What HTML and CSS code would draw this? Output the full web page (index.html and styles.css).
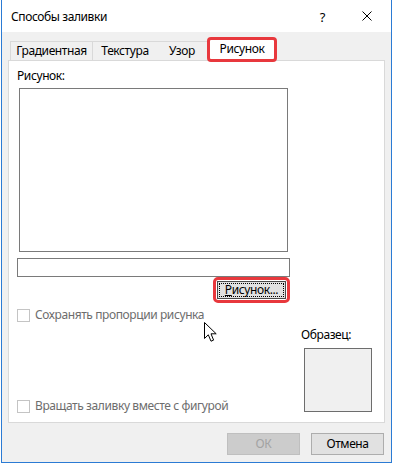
FILE: index.html
```html
<!DOCTYPE html>
<html lang="ru">
<head>
  <meta charset="UTF-8">
  <meta name="viewport" content="width=device-width, initial-scale=1.0">
  <title>Способы заливки</title>
  <link rel="stylesheet" href="styles.css">
</head>
<body>
  <div class="window">
    <div class="titlebar">
      <span class="title">Способы заливки</span>
      <span class="help">?</span>
      <svg class="close" width="10" height="10" viewBox="0 0 10 10">
        <path d="M0.5 0.5 L9.5 9.5 M9.5 0.5 L0.5 9.5" stroke="#000" stroke-width="1" fill="none"/>
      </svg>
    </div>

    <div class="tabs">
      <div class="tab tab-grad">Градиентная</div>
      <div class="tab tab-tex">Текстура</div>
      <div class="tab tab-pat">Узор</div>
      <div class="tab tab-pic active">Рисунок</div>
    </div>

    <div class="panel">
      <div class="left-col">
        <div class="label">Рисунок:</div>
        <div class="picture-box"></div>
        <div class="text-field"></div>
        <div class="btn-row">
          <div class="highlight">
            <button class="btn btn-focus"><u>Р</u>исунок...</button>
          </div>
        </div>
        <label class="check disabled">
          <span class="box"></span>
          <span>Сохранять пропорции рисунка</span>
        </label>
        <label class="check disabled check-bottom">
          <span class="box"></span>
          <span>Вращать заливку вместе с фигурой</span>
        </label>
      </div>
      <div class="right-col">
        <div class="label">Образец:</div>
        <div class="sample"></div>
      </div>
    </div>

    <div class="footer">
      <button class="btn btn-ok" disabled>ОК</button>
      <button class="btn btn-cancel">Отмена</button>
    </div>

    <!-- mouse pointer over the dialog -->
    <svg class="cursor" width="14" height="21" viewBox="0 0 14 21">
      <path d="M0.5 0.5 L0.5 16.5 L4.3 12.8 L7 19.2 L9.6 18.1 L7 11.8 L12.2 11.8 Z" fill="#fff" stroke="#000" stroke-width="1" stroke-linejoin="miter"/>
    </svg>
  </div>
</body>
</html>
```

FILE: styles.css
```css
body {
  margin: 0;
  background: #ffffff;
  font-family: "Noto Sans", "Liberation Sans", sans-serif;
  font-size: 12px;
  line-height: 16px;
  letter-spacing: -0.4px;
  color: #000000;
}
.window {
  position: relative;
  box-sizing: border-box;
  width: 391px;
  height: 463px;
  margin-left: 1px;
  background: #f0f0f0;
  border-left: 1px solid #2b7bd4;
  border-right: 1px solid #2b7bd4;
  border-bottom: 1px solid #2b7bd4;
  padding: 0 6px;
  display: flex;
  flex-direction: column;
}
.titlebar {
  height: 32px;
  margin: 0 -6px;
  background: #ffffff;
  display: flex;
  align-items: center;
  padding-left: 9px;
}
.title {
  flex: 1;
  padding-top: 1px;
}
.help {
  font-size: 13px;
  margin-right: 37px;
  padding-top: 1px;
}
.close {
  margin-right: 19px;
}

/* tabs */
.tabs {
  display: flex;
  height: 19px;
  margin-top: 9px;
  padding-left: 2px;
}
.tab {
  box-sizing: border-box;
  height: 19px;
  text-align: center;
  border-top: 1px solid #d9d9d9;
  line-height: 18px;
  background: #f0f0f0;
}
.tab-grad {
  width: 83px;
  border-left: 1px solid #d9d9d9;
  border-right: 1px solid #d9d9d9;
}
.tab-tex {
  width: 64px;
}
.tab-pat {
  width: 50px;
}
.tab.active {
  position: relative;
  z-index: 1;
  width: 70px;
  height: 25px;
  margin-top: -4px;
  background: #ffffff;
  border: 3px solid #e8383d;
  border-radius: 4px;
  line-height: 18px;
}

/* tab page */
.panel {
  box-sizing: border-box;
  height: 363px;
  background: #ffffff;
  border: 1px solid #d9d9d9;
  display: flex;
  padding: 7px 0 0 8px;
}
.left-col {
  width: 273px;
  display: flex;
  flex-direction: column;
  padding-bottom: 8px;
}
.picture-box {
  box-sizing: border-box;
  width: 269px;
  height: 164px;
  margin: 4px 0 0 2px;
  border: 1px solid #7a7a7a;
}
.text-field {
  box-sizing: border-box;
  height: 19px;
  margin-top: 6px;
  border: 1px solid #7a7a7a;
}
.btn-row {
  display: flex;
  justify-content: flex-end;
}
.highlight {
  border: 3px solid #e8383d;
  border-radius: 5px;
  padding: 1px;
  background: #ffffff;
}
.check {
  display: flex;
  align-items: center;
  margin-top: 4px;
}
.check .box {
  box-sizing: border-box;
  width: 13px;
  height: 13px;
  border: 1px solid #c4c4c4;
  margin-right: 5px;
  background: #ffffff;
}
.check.disabled {
  color: #6d6d6d;
}
.check-bottom {
  margin-top: auto;
}
.right-col {
  flex: 1;
  display: flex;
  flex-direction: column;
  justify-content: flex-end;
  padding-left: 11px;
  padding-bottom: 10px;
}
.sample {
  box-sizing: border-box;
  width: 68px;
  height: 64px;
  margin: 5px 0 0 3px;
  background: #f0f0f0;
  border: 1px solid #6d6d6d;
}

/* buttons */
.btn {
  box-sizing: border-box;
  font-family: inherit;
  font-size: 12px;
  line-height: 16px;
  letter-spacing: -0.4px;
  padding: 0;
  background: #e1e1e1;
  border: 1px solid #adadad;
  color: #000000;
}
.btn u {
  text-decoration-thickness: 1px;
}
.btn-focus {
  width: 69px;
  height: 18px;
  border-color: #4a4a4a;
  outline: 1px dotted #000000;
  outline-offset: -3px;
}
.footer {
  display: flex;
  justify-content: flex-end;
  gap: 11px;
  margin-top: 10px;
  padding-right: 1px;
}
.footer .btn {
  width: 73px;
  height: 22px;
}
.btn-ok {
  background: #cccccc;
  border-color: #bfbfbf;
  color: #a3a3a3;
}
.cursor {
  position: absolute;
  left: 202px;
  top: 322px;
}
```
